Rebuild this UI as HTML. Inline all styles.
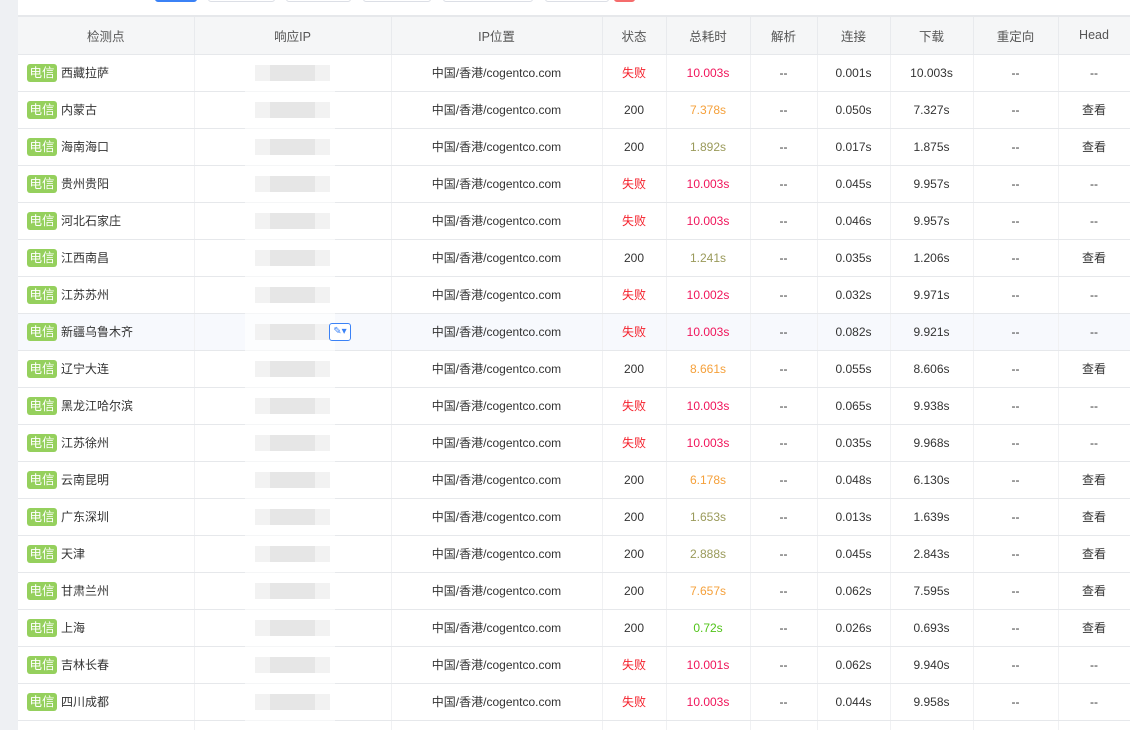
<!DOCTYPE html><html><head><meta charset="utf-8"><style>
*{margin:0;padding:0;box-sizing:border-box}
html,body{width:1130px;height:730px;overflow:hidden}
body{background:#fff;font-family:"Liberation Sans","Noto Sans CJK SC",sans-serif;font-size:12px;color:#333;position:relative}
.strip{position:absolute;left:0;top:0;width:18px;height:730px;background:#eef0f3}
.btn{position:absolute;top:-6px;height:8px;border:1px solid #dcdfe6;border-radius:3px;background:#fff}
table{position:absolute;left:18px;top:15px;width:1112px;border-collapse:collapse;table-layout:fixed}
th{height:38px;background:#f5f6f7;font-weight:normal;color:#555;font-size:12.5px;border-right:1px solid #e8eaed;border-top:2px solid #e6e8eb;border-bottom:1px solid #e6e8eb}
td{height:37px;text-align:center;border-bottom:1px solid #e6e8eb;border-right:1px solid #f0f1f3;font-size:12px}
td:first-child{text-align:left;padding-left:9px}
.b{display:inline-block;background:#95d05d;color:#fff;border-radius:3px;width:30px;height:18px;line-height:18px;text-align:center;margin-right:4px;font-size:12.5px}
.f{color:#f5222d}.r{color:#f0145a}.o{color:#f5a03a}.g{color:#9a9a5a}.gr{color:#52c41a}
tr.h td{background:#f7f9fd}
.ip{position:absolute;left:255px;width:75px;height:37px}
.ip i{position:absolute;top:10px;height:16px;background:#e6e6e6;left:15px;width:45px}
.ip b{position:absolute;top:10px;height:16px;background:#f2f2f2;left:0;width:75px}
</style></head><body>
<div class="strip"></div>
<div class="btn" style="left:155px;width:42px;background:#3b82f6;border-color:#3b82f6"></div>
<div class="btn" style="left:208px;width:67px"></div>
<div class="btn" style="left:286px;width:65px"></div>
<div class="btn" style="left:363px;width:68px"></div>
<div class="btn" style="left:443px;width:90px"></div>
<div class="btn" style="left:545px;width:64px"></div>
<div class="btn" style="left:614px;width:21px;background:#f56c6c;border-color:#f56c6c"></div>
<table>
<colgroup><col style="width:176px"><col style="width:197px"><col style="width:211px"><col style="width:64px"><col style="width:84px"><col style="width:67px"><col style="width:73px"><col style="width:83px"><col style="width:85px"><col style="width:72px"></colgroup>
<tr><th>检测点</th><th>响应IP</th><th>IP位置</th><th>状态</th><th>总耗时</th><th>解析</th><th>连接</th><th>下载</th><th>重定向</th><th>Head</th></tr>
<tr><td><span class="b">电信</span>西藏拉萨</td><td></td><td>中国/香港/cogentco.com</td><td class="f">失败</td><td class="r">10.003s</td><td>--</td><td>0.001s</td><td>10.003s</td><td>--</td><td>--</td></tr>
<tr><td><span class="b">电信</span>内蒙古</td><td></td><td>中国/香港/cogentco.com</td><td>200</td><td class="o">7.378s</td><td>--</td><td>0.050s</td><td>7.327s</td><td>--</td><td>查看</td></tr>
<tr><td><span class="b">电信</span>海南海口</td><td></td><td>中国/香港/cogentco.com</td><td>200</td><td class="g">1.892s</td><td>--</td><td>0.017s</td><td>1.875s</td><td>--</td><td>查看</td></tr>
<tr><td><span class="b">电信</span>贵州贵阳</td><td></td><td>中国/香港/cogentco.com</td><td class="f">失败</td><td class="r">10.003s</td><td>--</td><td>0.045s</td><td>9.957s</td><td>--</td><td>--</td></tr>
<tr><td><span class="b">电信</span>河北石家庄</td><td></td><td>中国/香港/cogentco.com</td><td class="f">失败</td><td class="r">10.003s</td><td>--</td><td>0.046s</td><td>9.957s</td><td>--</td><td>--</td></tr>
<tr><td><span class="b">电信</span>江西南昌</td><td></td><td>中国/香港/cogentco.com</td><td>200</td><td class="g">1.241s</td><td>--</td><td>0.035s</td><td>1.206s</td><td>--</td><td>查看</td></tr>
<tr><td><span class="b">电信</span>江苏苏州</td><td></td><td>中国/香港/cogentco.com</td><td class="f">失败</td><td class="r">10.002s</td><td>--</td><td>0.032s</td><td>9.971s</td><td>--</td><td>--</td></tr>
<tr class="h"><td><span class="b">电信</span>新疆乌鲁木齐</td><td></td><td>中国/香港/cogentco.com</td><td class="f">失败</td><td class="r">10.003s</td><td>--</td><td>0.082s</td><td>9.921s</td><td>--</td><td>--</td></tr>
<tr><td><span class="b">电信</span>辽宁大连</td><td></td><td>中国/香港/cogentco.com</td><td>200</td><td class="o">8.661s</td><td>--</td><td>0.055s</td><td>8.606s</td><td>--</td><td>查看</td></tr>
<tr><td><span class="b">电信</span>黑龙江哈尔滨</td><td></td><td>中国/香港/cogentco.com</td><td class="f">失败</td><td class="r">10.003s</td><td>--</td><td>0.065s</td><td>9.938s</td><td>--</td><td>--</td></tr>
<tr><td><span class="b">电信</span>江苏徐州</td><td></td><td>中国/香港/cogentco.com</td><td class="f">失败</td><td class="r">10.003s</td><td>--</td><td>0.035s</td><td>9.968s</td><td>--</td><td>--</td></tr>
<tr><td><span class="b">电信</span>云南昆明</td><td></td><td>中国/香港/cogentco.com</td><td>200</td><td class="o">6.178s</td><td>--</td><td>0.048s</td><td>6.130s</td><td>--</td><td>查看</td></tr>
<tr><td><span class="b">电信</span>广东深圳</td><td></td><td>中国/香港/cogentco.com</td><td>200</td><td class="g">1.653s</td><td>--</td><td>0.013s</td><td>1.639s</td><td>--</td><td>查看</td></tr>
<tr><td><span class="b">电信</span>天津</td><td></td><td>中国/香港/cogentco.com</td><td>200</td><td class="g">2.888s</td><td>--</td><td>0.045s</td><td>2.843s</td><td>--</td><td>查看</td></tr>
<tr><td><span class="b">电信</span>甘肃兰州</td><td></td><td>中国/香港/cogentco.com</td><td>200</td><td class="o">7.657s</td><td>--</td><td>0.062s</td><td>7.595s</td><td>--</td><td>查看</td></tr>
<tr><td><span class="b">电信</span>上海</td><td></td><td>中国/香港/cogentco.com</td><td>200</td><td class="gr">0.72s</td><td>--</td><td>0.026s</td><td>0.693s</td><td>--</td><td>查看</td></tr>
<tr><td><span class="b">电信</span>吉林长春</td><td></td><td>中国/香港/cogentco.com</td><td class="f">失败</td><td class="r">10.001s</td><td>--</td><td>0.062s</td><td>9.940s</td><td>--</td><td>--</td></tr>
<tr><td><span class="b">电信</span>四川成都</td><td></td><td>中国/香港/cogentco.com</td><td class="f">失败</td><td class="r">10.003s</td><td>--</td><td>0.044s</td><td>9.958s</td><td>--</td><td>--</td></tr>
<tr><td><span class="b">电信</span></td><td></td><td></td><td></td><td></td><td></td><td></td><td></td><td></td><td></td></tr>
</table>
<div style="position:absolute;left:245px;top:56px;width:90px;height:665px;background:rgba(255,255,255,.6)"></div>
<script>
for(let i=0;i<18;i++){document.write('<div class="ip" style="top:'+(55+i*37)+'px"><b></b><i></i></div>')}
</script>
<div style="position:absolute;left:329px;top:323px;width:22px;height:18px;border:1px solid #3b82f6;border-radius:3px;background:#fff;color:#3b82f6;font-size:10px;line-height:16px;text-align:center">✎▾</div>
</body></html>
